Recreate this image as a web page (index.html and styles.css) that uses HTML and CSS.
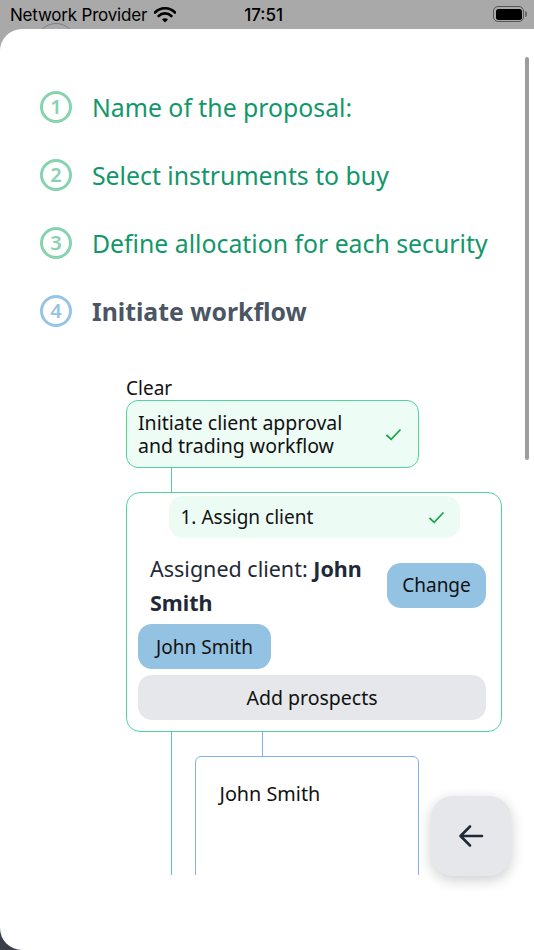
FILE: index.html
```html
<!DOCTYPE html>
<html lang="en">
<head>
<meta charset="utf-8">
<title>Proposal workflow</title>
<link rel="stylesheet" href="styles.css">
</head>
<body>
<div class="device">
  <div class="statusbar">
    <span class="carrier">Network Provider</span>
    <svg class="wifi" width="22" height="16" viewBox="0 0 22 16">
      <path d="M1 5.5 A14 14 0 0 1 21 5.5" fill="none" stroke="#000" stroke-width="2.6" stroke-linecap="round"/>
      <path d="M4.6 9 A9 9 0 0 1 17.4 9" fill="none" stroke="#000" stroke-width="2.6" stroke-linecap="round"/>
      <path d="M8 12.4 A4.2 4.2 0 0 1 14 12.4 L11 15.5 Z" fill="#000"/>
    </svg>
    <span class="time">17:51</span>
    <span class="battery"><span class="battery-fill"></span></span>
    <span class="battery-nub"></span>
  </div>
  <div class="ghost-ring"></div>
  <div class="sheet">
    <div class="scrollbar"></div>
    <ol class="steps">
      <li class="step done"><span class="num">1</span><span class="label">Name of the proposal:</span></li>
      <li class="step done"><span class="num">2</span><span class="label">Select instruments to buy</span></li>
      <li class="step done"><span class="num">3</span><span class="label">Define allocation for each security</span></li>
      <li class="step current"><span class="num">4</span><span class="label">Initiate workflow</span></li>
    </ol>

    <div class="flow">
      <div class="clear">Clear</div>
      <div class="root-box">
        <span class="root-text">Initiate client approval and trading workflow</span>
        <svg class="check" width="17" height="13" viewBox="0 0 17 13"><path d="M1.5 7 L6.2 11.3 L15.5 1.5" fill="none" stroke="#16a34a" stroke-width="1.7"/></svg>
      </div>
      <div class="vline green short"></div>
      <div class="card">
        <div class="card-head">
          <span>1. Assign client</span>
          <svg class="check" width="17" height="13" viewBox="0 0 17 13"><path d="M1.5 7 L6.2 11.3 L15.5 1.5" fill="none" stroke="#16a34a" stroke-width="1.7"/></svg>
        </div>
        <div class="assigned-row">
          <p class="assigned">Assigned client: <b>John Smith</b></p>
          <button class="btn blue change">Change</button>
        </div>
        <button class="btn blue chip">John Smith</button>
        <button class="btn gray wide">Add prospects</button>
      </div>
      <div class="below">
        <div class="trunk"></div>
        <div class="child">
          <div class="vline blue-line"></div>
          <div class="client-box">John Smith</div>
        </div>
      </div>
    </div>
  </div>
  <button class="fab" aria-label="Back">
    <svg width="26" height="24" viewBox="0 0 26 24"><path d="M24 12 H3 M12 2.5 L2.5 12 L12 21.5" fill="none" stroke="#1f2937" stroke-width="2.6" stroke-linecap="round" stroke-linejoin="round"/></svg>
  </button>
</div>
</body>
</html>
```

FILE: styles.css
```css
* { box-sizing: border-box; }
html, body { margin: 0; padding: 0; }
body {
  width: 534px;
  height: 950px;
  overflow: hidden;
  font-family: "Noto Sans", "Open Sans", sans-serif;
}
.device {
  position: relative;
  width: 534px;
  height: 950px;
  background: linear-gradient(#a9a9a9 50%, #3b3f4a 50%);
}
.statusbar {
  height: 29px;
  display: flex;
  align-items: center;
  padding: 0 0 0 10px;
  font-family: "Inter", "Liberation Sans", sans-serif;
  font-size: 17px;
  color: #000;
  position: relative;
}
.carrier { letter-spacing: -0.2px; }
.wifi { margin-left: 7px; margin-top: 1px; }
.time {
  margin-left: 68px;
  font-weight: 500;
}
.battery {
  position: absolute;
  left: 493px;
  top: 6px;
  width: 31px;
  height: 16px;
  border: 1.5px solid #555;
  border-radius: 5px;
  padding: 1.5px;
  display: flex;
}
.battery-fill { flex: 1; background: #000; border-radius: 2.5px; }
.battery-nub {
  position: absolute;
  left: 525px;
  top: 11px;
  width: 2px;
  height: 6px;
  background: #666;
  border-radius: 0 2px 2px 0;
}
.ghost-ring {
  position: absolute;
  left: 36px;
  top: 23px;
  width: 40px;
  height: 40px;
  border: 1.5px solid #7d8088;
  border-radius: 50%;
}
.sheet {
  position: relative;
  height: 921px;
  background: #fff;
  border-radius: 22px 0 0 22px;
  padding-top: 44px;
}
.scrollbar {
  position: absolute;
  right: 5px;
  top: 28px;
  width: 4px;
  height: 403px;
  background: #9d9d9d;
  border-radius: 2px;
}
.steps {
  list-style: none;
  margin: 0;
  padding: 0 0 0 40px;
}
.step {
  height: 68px;
  display: flex;
  align-items: center;
  gap: 20px;
}
.num {
  width: 32px;
  height: 32px;
  border: 3px solid #86d3b0;
  border-radius: 50%;
  display: flex;
  align-items: center;
  justify-content: center;
  color: #86d3b0;
  font-size: 20px;
  font-weight: 600;
  line-height: 1;
  padding-bottom: 1px;
}
.label {
  font-size: 24.8px;
  color: #12976a;
}
.current .num { border-color: #96c4e5; color: #96c4e5; }
.current .label { color: #4b5563; font-weight: 700; }

.flow {
  margin: 31px 0 0 126px;
  width: 376px;
  height: 499px;
  overflow: hidden;
  display: flex;
  flex-direction: column;
}
.flow > * { flex: none; }
.clear {
  font-size: 19px;
  line-height: 24px;
  color: #111;
}
.root-box {
  width: 293px;
  height: 68px;
  border: 1.5px solid #4fd49e;
  background: #edfcf5;
  border-radius: 12px;
  display: flex;
  align-items: center;
  justify-content: space-between;
  padding: 0 16px 0 11px;
  font-size: 19.5px;
  line-height: 23px;
  color: #111;
}
.root-text { width: 235px; }
.vline.green.short {
  margin-left: 45px;
  width: 0;
  height: 24px;
  border-left: 1.5px solid #4fd49e;
}
.card {
  border: 1.5px solid #4fd49e;
  border-radius: 14px;
  padding: 3px 15px 11px 11px;
  display: flex;
  flex-direction: column;
  background: #fff;
}
.card > * { flex: none; }
.card-head {
  align-self: center;
  width: 291px;
  height: 42px;
  margin-left: 4px;
  background: #ecfcf4;
  border-radius: 14px;
  display: flex;
  align-items: center;
  justify-content: space-between;
  padding: 0 15px 0 12px;
  font-size: 19px;
  color: #111;
}
.assigned-row {
  display: flex;
  align-items: center;
  justify-content: space-between;
  margin-top: 14px;
}
.assigned {
  margin: 0 0 0 12px;
  width: 232px;
  font-size: 21.5px;
  line-height: 34px;
  color: #1f2937;
}
.btn {
  border: 0;
  font-family: inherit;
  font-size: 19px;
  color: #111;
  border-radius: 14px;
  height: 45px;
  padding: 0;
}
.btn.blue { background: #94c2e2; }
.btn.gray { background: #e5e7eb; font-size: 19.5px; }
.change { width: 99px; margin-top: -2px; }
.chip { width: 133px; margin-top: 4px; }
.wide { width: 348px; margin-top: 6px; }

.below {
  flex: 1 1 auto !important;
  display: flex;
}
.trunk {
  margin-left: 45px;
  width: 0;
  border-left: 1.5px solid #4fd49e;
}
.child {
  margin-left: 22.5px;
  display: flex;
  flex-direction: column;
}
.vline.blue-line {
  flex: none;
  margin-left: 67px;
  width: 0;
  height: 24px;
  border-left: 1.5px solid #7fb3ee;
}
.client-box {
  flex: none;
  width: 224px;
  height: 200px;
  border: 1.5px solid #7fb3ee;
  border-radius: 6px;
  padding: 23px 0 0 24px;
  font-size: 19.8px;
  color: #111;
}
.fab {
  position: absolute;
  left: 431px;
  top: 796px;
  width: 80px;
  height: 80px;
  border: 0;
  border-radius: 22px;
  background: #e5e7eb;
  box-shadow: 0 4px 14px rgba(0,0,0,0.2);
  display: flex;
  align-items: center;
  justify-content: center;
  padding: 0;
}
```
